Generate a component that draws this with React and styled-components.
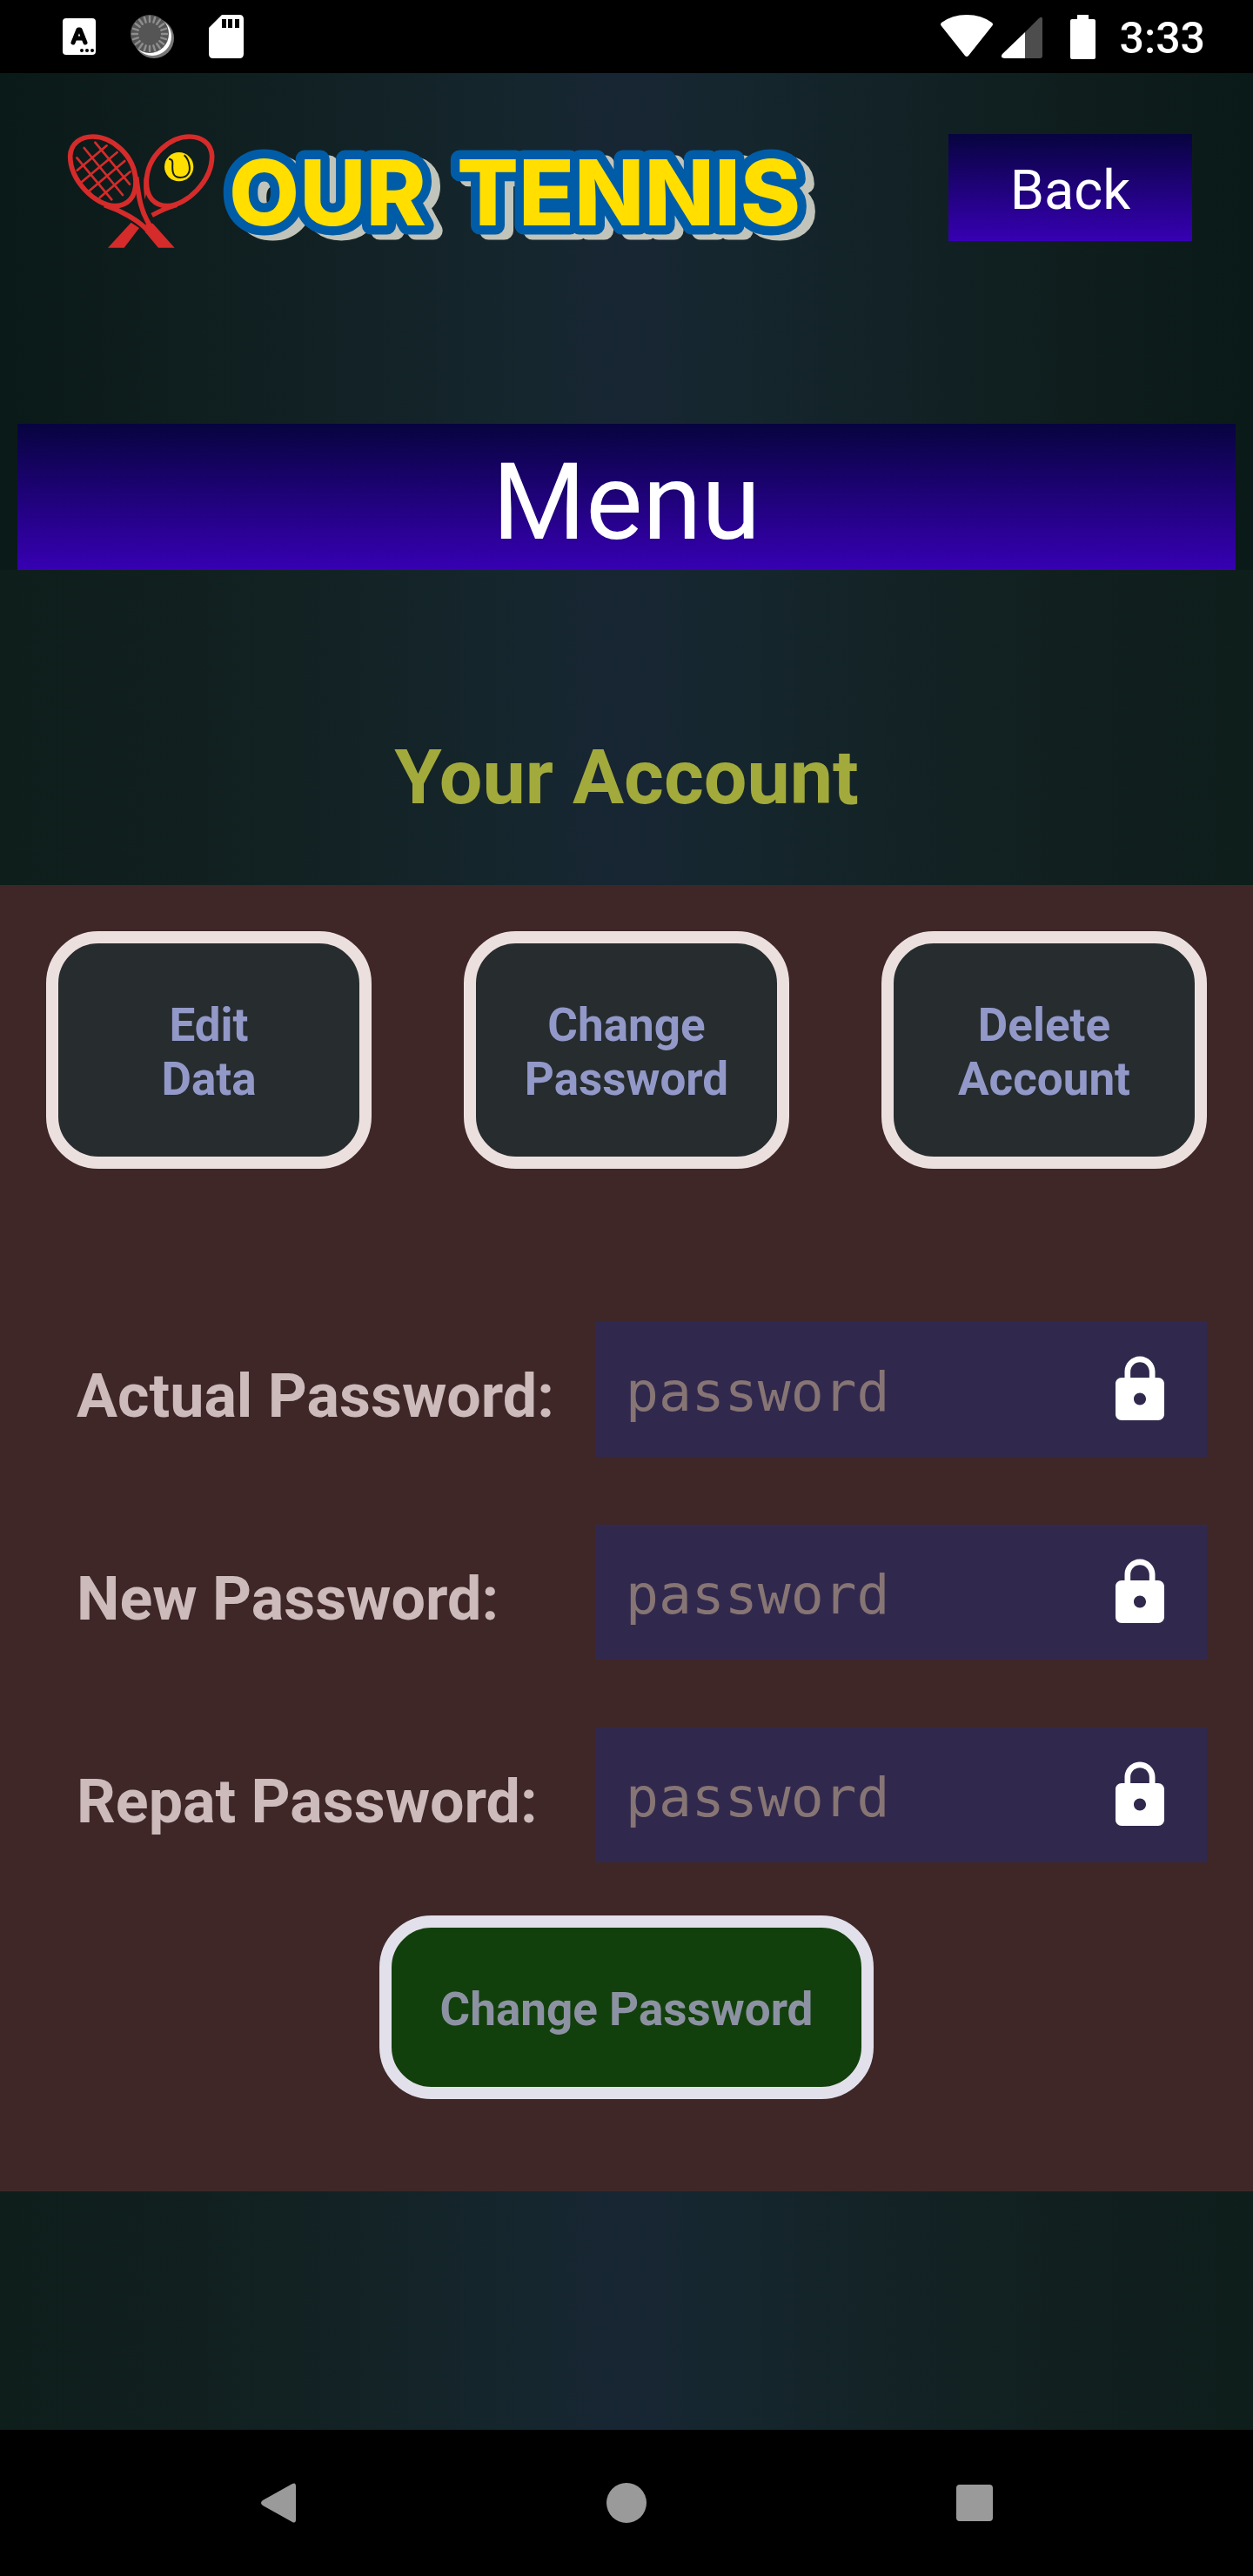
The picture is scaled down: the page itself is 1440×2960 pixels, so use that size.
import React from "react";
import styled, { createGlobalStyle } from "styled-components";

const GlobalStyle = createGlobalStyle`
  *, *::before, *::after { box-sizing: border-box; }
  body { margin: 0; background: #000; font-family: Roboto, "Noto Sans", sans-serif; }
  button, input { font-family: inherit; margin: 0; }
  svg { display: block; flex: none; }
`;

const Screen = styled.div`
  display: flex;
  flex-direction: column;
  min-height: 100vh;
`;

const StatusBar = styled.header`
  display: flex;
  align-items: center;
  justify-content: space-between;
  height: 84px;
  padding: 0 55px 0 72px;
  background: #000;
  color: #fff;
`;

const StatusGroup = styled.div`
  display: flex;
  align-items: center;
  gap: ${(p) => p.$gap}px;
`;

const Clock = styled.time`
  padding-top: 4px;
  font-size: 50px;
  font-weight: 500;
  line-height: 60px;
`;

const Content = styled.main`
  flex: 1;
  background: linear-gradient(90deg, #0e1e1b 0%, #11201f 16%, #132326 30%, #15262e 42%, #182634 50%, #15262e 58%, #132326 70%, #11201f 84%, #0e1e1b 100%);
`;

const Top = styled.section`
  padding-top: 70px;
  background: linear-gradient(90deg, #0a1a18 0%, #0f1e1e 15%, #122226 29%, #15262e 42%, #182634 50%, #15262e 58%, #122226 71%, #0f1e1d 85%, #0a1a18 100%);
`;

const Brand = styled.div`
  display: flex;
  justify-content: space-between;
  align-items: flex-start;
  gap: 40px;
  padding: 0 70px 0 72px;
`;

const PurpleButton = styled.button`
  border: 0;
  color: #fff;
  background: linear-gradient(180deg, #07043f 0%, #3700b3 100%);
  cursor: pointer;
`;

const BackButton = styled(PurpleButton)`
  width: 280px;
  height: 123px;
  padding: 6px 0 0;
  font-size: 63px;
`;

const MenuButton = styled(PurpleButton)`
  display: block;
  width: calc(100% - 40px);
  height: 168px;
  margin: 199px 20px 0;
  padding: 12px 0 0;
  font-size: 123px;
  line-height: 144px;
`;

const Title = styled.h1`
  margin: 186px 0 72px;
  color: #a3aa3c;
  font-size: 88px;
  font-weight: 700;
  line-height: 104px;
  text-align: center;
`;

const Panel = styled.section`
  padding: 53px 53px 106px;
  background: #3f2728;
`;

const Actions = styled.div`
  display: grid;
  grid-template-columns: repeat(3, 1fr);
  gap: 106px;
`;

const RoundButton = styled.button`
  border: 14px solid ${(p) => p.$edge};
  border-radius: 60px;
  background: ${(p) => p.$fill};
  color: ${(p) => p.$ink};
  font-size: 53px;
  font-weight: 700;
  line-height: 62px;
  cursor: pointer;
`;

const ActionButton = styled(RoundButton)`
  height: 273px;
  padding: 5px 0 0;
`;

const Form = styled.form`
  display: flex;
  flex-direction: column;
  gap: 78px;
  margin-top: 176px;
`;

const Row = styled.div`
  display: grid;
  grid-template-columns: minmax(0, 631fr) minmax(0, 703fr);
  align-items: center;
`;

const Label = styled.label`
  padding: 14px 0 0 35px;
  color: #cdbbbb;
  font-size: 70px;
  font-weight: 700;
  line-height: 82px;
  white-space: nowrap;
`;

const Field = styled.div`
  display: flex;
  align-items: center;
  height: 155px;
  padding: 0 35px;
  background: #31294d;
`;

const Input = styled.input`
  flex: 1;
  width: 100%;
  min-width: 0;
  height: 100%;
  padding: 6px 0 0;
  border: 0;
  outline: 0;
  background: transparent;
  color: #fff;
  font-family: "DejaVu Sans Mono", monospace;
  font-size: 63px;

  &::placeholder { color: #867574; opacity: 1; }
`;

const SubmitButton = styled(RoundButton)`
  align-self: center;
  height: 211px;
  margin-top: -17px;
  padding: 5px 56px 0;
`;

const Wordmark = styled.text`
  font-family: Inter, sans-serif;
  font-size: 105px;
  font-weight: 800;
  fill: #ffde00;
  stroke: #005ca6;
  stroke-width: 21px;
  stroke-linejoin: round;
  paint-order: stroke;
  filter: drop-shadow(10px 6px 0 #c1c4ba);
`;

const NavBar = styled.nav`
  display: grid;
  grid-template-columns: repeat(3, 1fr);
  height: 168px;
  padding: 0 120px;
  background: #000;
`;

const NavButton = styled.button`
  display: flex;
  align-items: center;
  justify-content: center;
  padding: 0;
  border: 0;
  background: none;
  cursor: pointer;
`;

function KeyboardIcon() {
  return (
    <svg width="38" height="42" viewBox="0 0 38 42" aria-hidden="true">
      <rect width="38" height="42" rx="4" fill="#fff" />
      <path d="M12 28 L18 13 H20 L26 28 M14 23 H24" fill="none" stroke="#000" strokeWidth="5" strokeLinecap="round" strokeLinejoin="round" />
      <circle cx="22" cy="37" r="2" />
      <circle cx="28" cy="37" r="2" />
      <circle cx="34" cy="37" r="2" />
    </svg>
  );
}

function SyncIcon() {
  const ticks = Array.from({ length: 20 }, (_, i) => i * 18);
  return (
    <svg width="50" height="50" viewBox="0 0 50 50" aria-hidden="true">
      <circle cx="27" cy="27" r="23" fill="#777" />
      <circle cx="25" cy="25" r="22" fill="#fff" />
      <circle cx="22" cy="22" r="22" fill="#555" />
      {ticks.map((a) => (
        <path key={a} d="M22 2 V8" stroke="#8e8e8e" strokeWidth="2.4" strokeLinecap="round" transform={`rotate(${a} 22 22)`} />
      ))}
    </svg>
  );
}

function SdIcon() {
  return (
    <svg width="40" height="50" viewBox="0 0 40 50" aria-hidden="true">
      <path d="M15 0 H35 Q40 0 40 5 V45 Q40 50 35 50 H5 Q0 50 0 45 V15 Z" fill="#fff" />
      <path d="M15 5h5v10h-5z M22 5h5v10h-5z M30 5h5v10h-5z" fill="#000" />
    </svg>
  );
}

function WifiIcon() {
  return (
    <svg width="60" height="50" viewBox="0 0 60 50" aria-hidden="true">
      <path d="M1 13 Q-1 11 1 9 Q13 0 30 0 Q47 0 59 9 Q61 11 59 13 L32 47 Q30 49 28 47 Z" fill="#fff" />
    </svg>
  );
}

function SignalIcon() {
  return (
    <svg width="47" height="50" viewBox="0 0 47 50" aria-hidden="true">
      <path d="M43 4 Q47 1 47 5 V47 Q47 50 44 50 H27 V20 Z" fill="#4d4d4d" />
      <path d="M27 20 V50 H3 Q-2 49 1 45 Z" fill="#fff" />
    </svg>
  );
}

function BatteryIcon() {
  return (
    <svg width="29" height="51" viewBox="0 0 29 51" aria-hidden="true">
      <path d="M8 0 H21 V5 H27 Q29 5 29 7 V49 Q29 51 27 51 H2 Q0 51 0 49 V7 Q0 5 2 5 H8 Z" fill="#fff" />
    </svg>
  );
}

function LockIcon() {
  return (
    <svg width="84" height="84" viewBox="0 0 24 24" aria-hidden="true">
      <path
        fill="#fff"
        d="M18 8h-1V6c0-2.76-2.24-5-5-5S7 3.24 7 6v2H6c-1.1 0-2 .9-2 2v10c0 1.1.9 2 2 2h12c1.1 0 2-.9 2-2V10c0-1.1-.9-2-2-2zm-6 9c-1.1 0-2-.9-2-2s.9-2 2-2 2 .9 2 2-.9 2-2 2zm3.1-9H8.9V6c0-1.71 1.39-3.1 3.1-3.1 1.71 0 3.1 1.39 3.1 3.1v2z"
      />
    </svg>
  );
}

function Logo() {
  return (
    <svg width="890" height="134" viewBox="72 154 890 134" role="img" aria-label="Our Tennis">
      <g transform="translate(60 140) scale(0.33333)">
        <g fill="none" stroke="#d52b2a" strokeWidth="17">
          <path d="M140 51 C205 51 285 115 288 205 C289 260 260 290 215 290 C150 288 62 205 62 118 C64 72 100 51 140 51 Z" />
          <path d="M473 51 C408 51 328 115 325 205 C324 260 353 290 398 290 C463 288 551 205 551 118 C549 72 513 51 473 51 Z" />
          <path d="M180 287 C235 305 300 340 330 376" />
          <path d="M290 190 C298 260 305 310 340 362" />
          <path d="M430 286 C400 294 370 308 344 322" strokeWidth="16" />
        </g>
        <path d="M316 190 L327 240 L319 268 Q313 230 316 190 Z" fill="#d52b2a" />
        <path d="M323 350 H347 L422 434 H366 L322 382 Z" fill="#d52b2a" />
        <path d="M272 347 L300 366 L248 434 H192 Z" fill="#d52b2a" />
        <g stroke="#d52b2a" strokeWidth="8" strokeLinecap="round">
          <path d="M148 71 L267 215 M110 90 L243 252 M85 124 L205 268" />
          <path d="M86 167 L188 82 M102 207 L224 105 M128 238 L250 135 M164 261 L269 172" />
        </g>
        <circle cx="437" cy="155" r="50" fill="#ffde00" />
        <path d="M402 128 Q416 128 415 144 C412 182 422 192 442 192 C468 192 478 172 472 146 Q468 126 455 115" fill="none" stroke="#101f20" strokeWidth="6" />
      </g>
      <Wordmark x="263" y="259">OUR</Wordmark>
      <Wordmark x="525" y="259">TENNIS</Wordmark>
    </svg>
  );
}

const actions = [
  ["Edit", "Data"],
  ["Change", "Password"],
  ["Delete", "Account"],
];

const fields = [
  { id: "actual", label: "Actual Password:" },
  { id: "new", label: "New Password:" },
  { id: "repeat", label: "Repat Password:" },
];

export default function App() {
  return (
    <Screen>
      <GlobalStyle />
      <StatusBar>
        <StatusGroup $gap={40}>
          <KeyboardIcon />
          <SyncIcon />
          <SdIcon />
        </StatusGroup>
        <StatusGroup $gap={28}>
          <StatusGroup $gap={32}>
            <StatusGroup $gap={10}>
              <WifiIcon />
              <SignalIcon />
            </StatusGroup>
            <BatteryIcon />
          </StatusGroup>
          <Clock>3:33</Clock>
        </StatusGroup>
      </StatusBar>

      <Content>
        <Top>
          <Brand>
            <Logo />
            <BackButton type="button">Back</BackButton>
          </Brand>
          <MenuButton type="button">Menu</MenuButton>
        </Top>

        <Title>Your Account</Title>

        <Panel>
          <Actions>
            {actions.map(([first, second]) => (
              <ActionButton key={second} type="button" $edge="#ece0df" $fill="#272c2f" $ink="#9299c8">
                {first}
                <br />
                {second}
              </ActionButton>
            ))}
          </Actions>

          <Form onSubmit={(e) => e.preventDefault()}>
            {fields.map((f) => (
              <Row key={f.id}>
                <Label htmlFor={f.id}>{f.label}</Label>
                <Field>
                  <Input id={f.id} type="password" placeholder="password" />
                  <LockIcon />
                </Field>
              </Row>
            ))}
            <SubmitButton type="submit" $edge="#e2e0eb" $fill="#12400c" $ink="#8c92a2">
              Change Password
            </SubmitButton>
          </Form>
        </Panel>
      </Content>

      <NavBar>
        <NavButton type="button" aria-label="Back">
          <svg width="40" height="46" viewBox="0 0 40 46">
            <path d="M36 1 Q40 -1 40 4 V42 Q40 47 36 45 L2 26 Q-2 23 2 20 Z" fill="#9a9a9a" />
          </svg>
        </NavButton>
        <NavButton type="button" aria-label="Home">
          <svg width="46" height="46" viewBox="0 0 46 46">
            <circle cx="23" cy="23" r="23" fill="#9a9a9a" />
          </svg>
        </NavButton>
        <NavButton type="button" aria-label="Recent apps">
          <svg width="42" height="42" viewBox="0 0 42 42">
            <rect width="42" height="42" rx="4" fill="#9a9a9a" />
          </svg>
        </NavButton>
      </NavBar>
    </Screen>
  );
}
